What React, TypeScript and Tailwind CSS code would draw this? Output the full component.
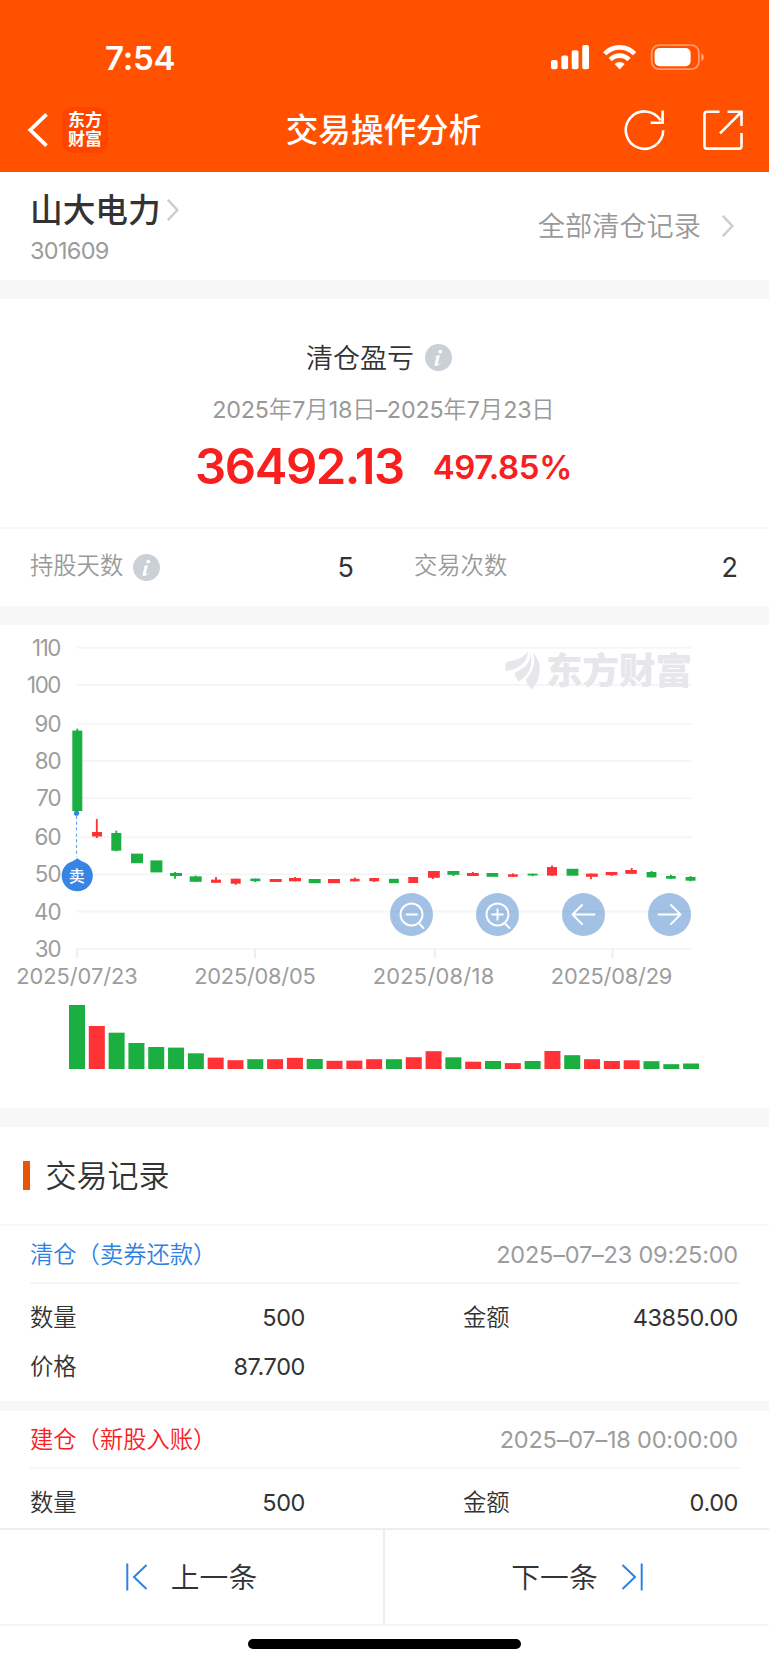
import React from "react";

const UP = "#ff3236";
const DOWN = "#1aaf40";

type Candle = {
  x: number;
  w: number;
  top: number;
  bottom: number;
  up?: boolean;
  wick?: [number, number];
  wx?: number;
};

const candles: Candle[] = [
  { x: 72.3, w: 10, top: 730.6, bottom: 811, wick: [728.7, 811] },
  { x: 92, w: 10, top: 832, bottom: 836.5, up: true, wick: [819, 838], wx: 96.8 },
  { x: 111.3, w: 10, top: 833, bottom: 850.7, wick: [830.6, 851.3] },
  { x: 131, w: 12, top: 853.6, bottom: 863.2 },
  { x: 150.4, w: 12, top: 860.4, bottom: 872.4 },
  { x: 170, w: 12, top: 873, bottom: 876, wick: [872, 878.8], wx: 175 },
  { x: 189.7, w: 12, top: 876.4, bottom: 881.8, wick: [875.6, 881.8] },
  { x: 211, w: 10, top: 879.6, bottom: 882.8, up: true, wick: [877, 882.8] },
  { x: 230.7, w: 10, top: 878.7, bottom: 883.7, up: true, wick: [878.7, 884.8] },
  { x: 250.3, w: 10, top: 878.6, bottom: 881.2, wick: [878.6, 882] },
  { x: 269.7, w: 12, top: 879, bottom: 882, up: true },
  { x: 289, w: 12, top: 878, bottom: 881.3, up: true, wick: [877, 881.3] },
  { x: 308.7, w: 12, top: 879, bottom: 883.2 },
  { x: 328, w: 12, top: 879, bottom: 883.2, up: true },
  { x: 350, w: 9.6, top: 878.8, bottom: 881.4, up: true, wick: [877.6, 881.4] },
  { x: 369.3, w: 9.8, top: 878, bottom: 881.3, up: true, wick: [878, 882] },
  { x: 389, w: 9.8, top: 878.8, bottom: 883.2 },
  { x: 408.3, w: 9.8, top: 877, bottom: 883, up: true },
  { x: 428, w: 11.8, top: 871, bottom: 877.8, up: true, wick: [871, 879], wx: 432.7 },
  { x: 447.4, w: 12, top: 871, bottom: 874.8, wick: [871, 876] },
  { x: 467, w: 11.8, top: 873, bottom: 876, up: true, wick: [872, 876] },
  { x: 486.6, w: 11.6, top: 873, bottom: 876.8 },
  { x: 508, w: 9.8, top: 874.3, bottom: 876.8, up: true, wick: [873.4, 876.8] },
  { x: 527.6, w: 10, top: 873.7, bottom: 875.5, wick: [873.7, 876.2] },
  { x: 547, w: 10, top: 867, bottom: 875.6, up: true, wick: [865.4, 876] },
  { x: 566.6, w: 11.8, top: 868.8, bottom: 875.7 },
  { x: 586, w: 11.8, top: 873.6, bottom: 876.8, up: true, wick: [873.6, 879.2], wx: 591 },
  { x: 605.7, w: 11.7, top: 872, bottom: 875.2, up: true, wick: [872, 876] },
  { x: 625.3, w: 11.5, top: 870, bottom: 873.8, up: true, wick: [868, 873.8], wx: 631.7 },
  { x: 646.6, w: 9.8, top: 872, bottom: 877.4, wick: [871, 877.4] },
  { x: 666, w: 9.8, top: 876, bottom: 878.7, wick: [874.8, 878.7] },
  { x: 685.6, w: 9.9, top: 877, bottom: 880.7, wick: [876, 881.3] },
];

const volumes: [number, boolean][] = [
  [64, false], [43, true], [36.3, false], [26, false], [22, false], [21.4, false],
  [15.7, false], [11.4, true], [8.8, true], [9.8, false], [9.8, true], [11.2, true],
  [10, false], [8.2, true], [8.4, true], [9.8, true], [9.8, false], [11.8, true],
  [17.8, true], [11.7, false], [7.3, true], [8, false], [5.9, true], [8, false],
  [18, true], [13.8, false], [9.8, true], [8, true], [8.7, true], [7.8, false],
  [4.8, false], [5.5, false],
];

const levels: [number, number][] = [
  [110, 647.7], [100, 684.8], [90, 723.8], [80, 761], [70, 798.2],
  [60, 837.2], [50, 874.3], [40, 911.5], [30, 948.8],
];

const dates: [string, number, number][] = [
  ["2025/07/23", 77.3, 77],
  ["2025/08/05", 255, 255],
  ["2025/08/18", 434.8, 433.4],
  ["2025/08/29", 612.5, 611.6],
];

function Chevron() {
  return (
    <svg className="block h-[22px] w-[12px]" viewBox="0 0 12 22" fill="none" stroke="#cccccc" strokeWidth="2.4">
      <path d="M0.8 0.8 10.4 11 0.8 21.2" />
    </svg>
  );
}

function InfoIcon() {
  return (
    <svg className="block size-[27px]" viewBox="0 0 27 27">
      <circle cx="13.5" cy="13.5" r="13.5" fill="#cbd0d6" />
      <circle cx="15.3" cy="7.6" r="1.9" fill="#fff" />
      <path
        d="M10.5 12.1c1.6-.2 2.8-.6 4-1.2l.5.2-2.2 8.2c-.3 1.1.4 1.2 2.4-.6l.4.4c-1.6 2-3.2 3-4.6 3-1.300 0-1.700-.9-1.300-2.400l1.500-5.500c.3-1.200.1-1.500-.8-1.500z"
        fill="#fff"
      />
    </svg>
  );
}

function StatusIcons() {
  return (
    <svg className="block h-[28px] w-[156px]" viewBox="550 43 156 28" fill="#fff">
      <rect x="551" y="60" width="6.600" height="9.300" rx="2" />
      <rect x="561.300" y="55.500" width="6.800" height="13.800" rx="2" />
      <rect x="571.700" y="50.300" width="6.800" height="19" rx="2" />
      <rect x="582.200" y="45" width="6.800" height="24.300" rx="2" />
      <g fill="none" stroke="#fff" strokeWidth="4.600">
        <path d="M604.700 53.800a20.500 20.500 0 0 1 29.900 0" />
        <path d="M610.300 59.600a13 13 0 0 1 18.700 0" />
      </g>
      <path d="M614.600 63.900a7.500 7.500 0 0 1 10.100 0l-5 5.500z" />
      <rect x="651.700" y="45.200" width="47.200" height="24" rx="7.500" fill="none" stroke="#fff" strokeOpacity=".42" strokeWidth="1.800" />
      <rect x="654.600" y="48" width="36" height="18.300" rx="5" />
      <path d="M701.300 53.300c3.400 1.300 3.400 6.500 0 7.800z" fillOpacity=".5" />
    </svg>
  );
}

function Header() {
  return (
    <header className="h-[172px] bg-[#ff5100] text-white">
      <div className="flex h-[86px] items-start justify-between pr-[63px] pl-[105px]">
        <div className="mt-[41px] text-[33px] leading-[34px] font-semibold tracking-[-0.200px]">7:54</div>
        <div className="mt-[43px]">
          <StatusIcons />
        </div>
      </div>
      <div className="grid h-[86px] grid-cols-[1fr_auto_1fr] items-center pt-[1px]">
        <div className="flex items-center pl-[27px]">
          <svg className="block h-[34px] w-[22px]" viewBox="0 0 22 34" fill="none" stroke="#fff" strokeWidth="3.800">
            <path d="M19.500 1.300 3.300 17 19.500 32.700" />
          </svg>
          <div className="ml-[13px] flex size-[46px] flex-col items-center justify-center rounded-[11px] bg-[#ff4400] text-[17px] leading-[19px] font-bold">
            <span>东方</span>
            <span>财富</span>
          </div>
        </div>
        <h1 className="pr-[2px] text-[32.600px] leading-[44px] font-medium">交易操作分析</h1>
        <div className="flex items-center justify-end gap-[37px] pr-[25px]">
          <svg className="block size-[42px]" viewBox="623 108 42 42" fill="none" stroke="#fff" strokeWidth="2.600">
            <path d="M663.200 129.300A18.700 18.700 0 1 1 660.500 119.400" />
            <path d="M662.600 109.600V121.800H650.700" />
          </svg>
          <svg className="block size-[42px]" viewBox="702.500 108 42 42" fill="none" stroke="#fff" strokeWidth="2.600">
            <path d="M720 110.700H707.500Q705 110.700 705 113.200V145Q705 147.600 707.500 147.600H739.500Q742 147.600 742 145V132" />
            <path d="M728 110.700H742V125M741.300 111.500 720.500 132.300" />
          </svg>
        </div>
      </div>
    </header>
  );
}

function ToolButton({ children }: { children: React.ReactNode }) {
  return (
    <button className="size-[43px] rounded-full bg-[#4884ca]/50">
      <svg className="block size-[43px]" viewBox="0 0 43 43" fill="none" stroke="#fff" strokeWidth="1.900" strokeLinecap="round" strokeLinejoin="round">
        {children}
      </svg>
    </button>
  );
}

function PriceChart() {
  return (
    <section className="relative h-[483px]">
      <svg className="block h-[483px] w-[769px]" viewBox="0 625 769 483">
        <g fill="#f5f5f5">
          {levels.map(([v, y]) => (
            <rect key={v} x="77" y={y - 0.9} width="614.500" height="1.900" />
          ))}
        </g>
        <g fill="#ededed">
          {dates.map(([d, x]) => (
            <rect key={d} x={x - 0.9} y="948.500" width="1.800" height="10" />
          ))}
        </g>
        <g fill="#9c9c9c" fontSize="22.300" fontWeight="400" textAnchor="end">
          {levels.map(([v, y]) => (
            <text key={v} x={v >= 100 ? 60 : 60.7} y={y + 8} letterSpacing={v >= 100 ? -1.4 : -0.9}>
              {v}
            </text>
          ))}
        </g>
        <g fill="#9c9c9c" fontSize="21.800" fontWeight="400" textAnchor="middle">
          {dates.map(([d, , x]) => (
            <text key={d} x={x} y="983.800" textLength="121.500" lengthAdjust="spacing">
              {d}
            </text>
          ))}
        </g>
        <g fill="#e6e6eb">
          <path d="M527.800 651.500C524 658.500 514.500 660 506 662.200 504.600 664 505.200 668 506 671.200 517 669 527.500 664.500 527.800 651.500z" />
          <path d="M529.800 651C532.500 663 522.500 669.500 515 672.500 514.600 676 516.500 679 518.600 681.500 528 676 534.500 666 529.800 651z" />
          <path d="M533 652.500C537 665 531 674 525.800 679.500 526.500 684 529.500 687 532 689.200 541.500 679 543 663 533 652.500z" />
          <text x="546" y="684" fontSize="36.500" fontWeight="900">
            东方财富
          </text>
        </g>
        {candles.map((c, i) => {
          const color = c.up ? UP : DOWN;
          const wx = c.wx ?? c.x + c.w / 2;
          return (
            <g key={i} fill={color}>
              <rect x={c.x} y={c.top} width={c.w} height={c.bottom - c.top} />
              {c.wick && <rect x={wx - 0.9} y={c.wick[0]} width="1.800" height={c.wick[1] - c.wick[0]} />}
            </g>
          );
        })}
        {volumes.map(([h, up], i) => (
          <rect key={i} x={69 + i * 19.81} y={1069 - h} width="16" height={h} fill={up ? UP : DOWN} />
        ))}
        <path d="M76.500 816V857" stroke="#5f9fec" strokeWidth="1.100" strokeDasharray="3 2.800" />
        <circle cx="76.500" cy="813.200" r="2.600" fill="#3884e5" />
        <path d="M77.300 858C80.500 861.500 84 861.500 87.500 864A15.600 15.600 0 1 1 67 864C70.500 861.500 74 861.500 77.300 858z" fill="#3884e5" />
        <text x="76.700" y="881.800" fill="#fff" fontSize="16" fontWeight="500" textAnchor="middle">
          卖
        </text>
      </svg>
      <div className="absolute top-[268px] left-[390px] flex gap-[43px]">
        <ToolButton>
          <circle cx="21.500" cy="21.500" r="11" />
          <path d="M16.500 21.500H27M28.500 30 33.500 35" />
        </ToolButton>
        <ToolButton>
          <circle cx="21.500" cy="21.500" r="11" />
          <path d="M16.200 21.500H26.800M21.500 16.200V26.800M28.500 30 33.500 35" />
        </ToolButton>
        <ToolButton>
          <path d="M32.500 21.500H10.500M20 12 10.500 21.500 20 31" />
        </ToolButton>
        <ToolButton>
          <path d="M10.500 21.500H32.500M23 12 32.500 21.500 23 31" />
        </ToolButton>
      </div>
    </section>
  );
}

type Field = { label: string; value: string };

function Cell({ label, value, className }: Field & { className: string }) {
  return (
    <div className={"flex items-center justify-between " + className}>
      <span className="font-[350]">{label}</span>
      <span className="pb-[1px] text-[23.500px] tracking-[-0.400px]">{value}</span>
    </div>
  );
}

function RecordHead({ title, time, tone }: { title: string; time: string; tone: string }) {
  return (
    <div className="mx-[30px] flex h-[58px] items-center justify-between border-b-2 border-[#f6f6f6] pt-[2px]">
      <span className={"text-[23.300px] leading-[34px] font-[350] " + tone}>{title}</span>
      <span className="pr-[1px] text-[23.500px] leading-[34px] tracking-[-0.200px] text-[#9c9c9c]">{time}</span>
    </div>
  );
}

export default function App() {
  return (
    <div className="flex h-[1665px] w-[769px] flex-col overflow-hidden bg-white font-['Inter','Noto_Sans_CJK_SC',sans-serif] text-[#333333]">
      <Header />

      <section className="flex h-[108px] justify-between pr-[35px] pl-[30px]">
        <div className="pt-[16px]">
          <div className="flex items-center gap-[6px]">
            <span className="text-[32.700px] leading-[44px] font-medium">山大电力</span>
            <Chevron />
          </div>
          <div className="mt-[3px] text-[23.500px] leading-[32px] tracking-[-0.700px] text-[#9c9c9c]">301609</div>
        </div>
        <div className="flex items-center gap-[21px]">
          <span className="pt-[2px] text-[27.200px] leading-[40px] font-[350] text-[#999999]">全部清仓记录</span>
          <Chevron />
        </div>
      </section>
      <div className="h-[19px] bg-[#f7f7f7]" />

      <section className="flex h-[228px] flex-col items-center pt-[38px]">
        <div className="flex h-[40px] items-center gap-[11px] pr-[11px]">
          <span className="pt-[3px] text-[27px] leading-[40px] font-[350]">清仓盈亏</span>
          <InfoIcon />
        </div>
        <div className="mt-[16px] pr-[2px] text-[23.300px] leading-[34px] font-[350] text-[#999999]">
          <span className="font-normal tracking-[-0.200px]">2025</span>年<span className="font-normal">7</span>月
          <span className="font-normal tracking-[-0.200px]">18</span>日<span className="font-normal tracking-[-0.200px]">–2025</span>年
          <span className="font-normal">7</span>月<span className="font-normal tracking-[-0.200px]">23</span>日
        </div>
        <div className="mt-[10px] flex items-center gap-[29px] pr-[2px] text-[#f8201f]">
          <span className="text-[49px] leading-[60px] font-semibold tracking-[-1.450px]">36492.13</span>
          <span className="text-[33px] leading-[60px] font-semibold tracking-[-0.400px]">497.85%</span>
        </div>
      </section>
      <section className="flex h-[79px] items-center border-t-2 border-[#f7f7f7] text-[23.300px]">
        <div className="flex w-[384px] items-center pr-[30px] pl-[30px]">
          <span className="pb-[4px] leading-[34px] font-[350] text-[#999999]">持股天数</span>
          <span className="ml-[10px]">
            <InfoIcon />
          </span>
          <span className="ml-auto text-[27px] leading-[34px]">5</span>
        </div>
        <div className="flex flex-1 items-center justify-between pr-[31px] pl-[30px]">
          <span className="pb-[4px] leading-[34px] font-[350] text-[#999999]">交易次数</span>
          <span className="text-[27px] leading-[34px]">2</span>
        </div>
      </section>
      <div className="h-[19px] bg-[#f7f7f7]" />

      <PriceChart />
      <div className="h-[19px] bg-[#f7f7f7]" />

      <section className="flex h-[99px] items-center border-b-2 border-[#f7f7f7] pl-[23px]">
        <div className="h-[29px] w-[6.500px] bg-[#ea5504]" />
        <h2 className="ml-[16px] pt-[1px] text-[31px] leading-[40px] font-[350]">交易记录</h2>
      </section>

      <section className="h-[175px] text-[23.300px]">
        <RecordHead title="清仓（卖券还款）" time="2025–07–23 09:25:00" tone="text-[#2f80e3]" />
        <div className="flex flex-wrap justify-between pt-[10px] pr-[31px] pl-[30px]">
          <Cell label="数量" value="500" className="h-[49px] w-[275px]" />
          <Cell label="金额" value="43850.00" className="h-[49px] w-[275px]" />
          <Cell label="价格" value="87.700" className="h-[49px] w-[275px]" />
        </div>
      </section>
      <div className="h-[10px] bg-[#f7f7f7]" />
      <section className="h-[117px] text-[23.300px]">
        <RecordHead title="建仓（新股入账）" time="2025–07–18 00:00:00" tone="text-[#f8201f]" />
        <div className="flex justify-between pt-[10px] pr-[31px] pl-[30px]">
          <Cell label="数量" value="500" className="h-[49px] w-[275px]" />
          <Cell label="金额" value="0.00" className="h-[49px] w-[275px]" />
        </div>
      </section>

      <footer className="flex-1 border-t-2 border-[#ededed] bg-white text-[28.800px]">
        <div className="flex h-[96px] border-b-2 border-[#f5f5f5]">
          <button className="flex w-[385px] items-center justify-center gap-[23px] border-r-2 border-[#ededed]">
            <svg className="block h-[28px] w-[22px]" viewBox="0 0 22 28" fill="none" stroke="#2f80e3" strokeWidth="2">
              <path d="M1.300 0.500V27.500M20.500 2 8 14 20.500 26" />
            </svg>
            <span className="pt-[2px] leading-[40px] font-[350]">上一条</span>
          </button>
          <button className="flex flex-1 items-center justify-center gap-[23px]">
            <span className="pt-[2px] leading-[40px] font-[350]">下一条</span>
            <svg className="block h-[28px] w-[22px]" viewBox="0 0 22 28" fill="none" stroke="#2f80e3" strokeWidth="2">
              <path d="M20.700 0.500V27.500M1.500 2 14 14 1.500 26" />
            </svg>
          </button>
        </div>
        <div className="mx-auto mt-[13px] h-[10px] w-[273px] rounded-full bg-black" />
      </footer>
    </div>
  );
}
